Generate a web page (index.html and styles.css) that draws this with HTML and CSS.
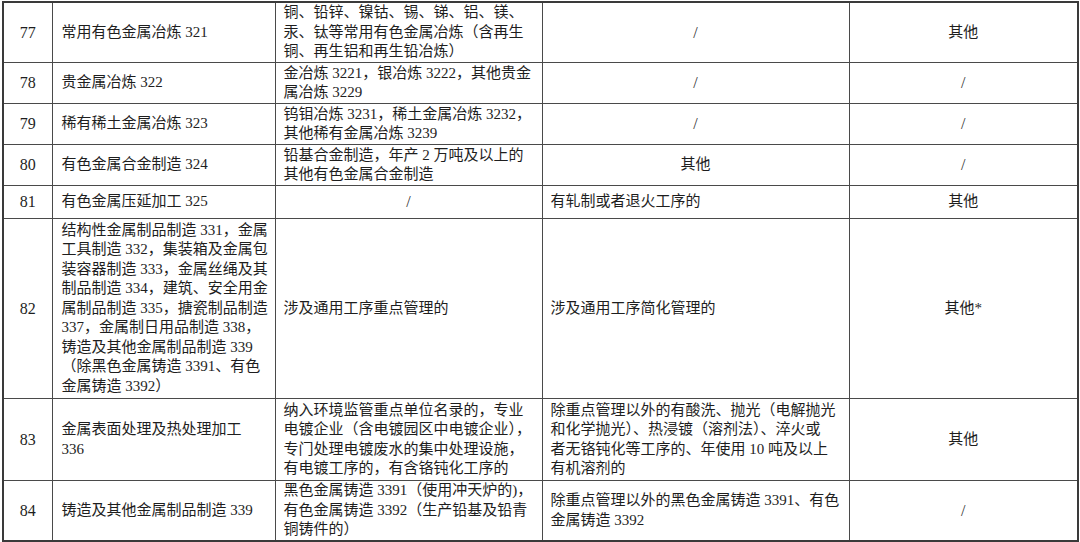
FILE: index.html
```html
<!DOCTYPE html>
<html lang="zh-CN">
<head>
<meta charset="utf-8">
<title>表</title>
<link rel="stylesheet" href="styles.css">
</head>
<body>
<table class="grid">
  <colgroup>
    <col class="c-no"><col class="c-name"><col class="c-a"><col class="c-b"><col class="c-c">
  </colgroup>
  <tbody>
    <tr class="r77">
      <td class="no">77</td>
      <td class="name">常用有色金属冶炼 321</td>
      <td class="txt">铜、铅锌、镍钴、锡、锑、铝、镁、<br>汞、钛等常用有色金属冶炼（含再生<br>铜、再生铝和再生铅冶炼）</td>
      <td class="mid slash">/</td>
      <td class="mid">其他</td>
    </tr>
    <tr class="r78">
      <td class="no">78</td>
      <td class="name">贵金属冶炼 322</td>
      <td class="txt">金冶炼 3221，银冶炼 3222，其他贵金<br>属冶炼 3229</td>
      <td class="mid slash">/</td>
      <td class="mid slash">/</td>
    </tr>
    <tr class="r79">
      <td class="no">79</td>
      <td class="name">稀有稀土金属冶炼 323</td>
      <td class="txt">钨钼冶炼 3231，稀土金属冶炼 3232，<br>其他稀有金属冶炼 3239</td>
      <td class="mid slash">/</td>
      <td class="mid slash">/</td>
    </tr>
    <tr class="r80">
      <td class="no">80</td>
      <td class="name">有色金属合金制造 324</td>
      <td class="txt">铅基合金制造，年产 2 万吨及以上的<br>其他有色金属合金制造</td>
      <td class="mid">其他</td>
      <td class="mid slash">/</td>
    </tr>
    <tr class="r81">
      <td class="no">81</td>
      <td class="name">有色金属压延加工 325</td>
      <td class="mid slash">/</td>
      <td class="txt">有轧制或者退火工序的</td>
      <td class="mid">其他</td>
    </tr>
    <tr class="r82">
      <td class="no">82</td>
      <td class="name">结构性金属制品制造 331，金属<br>工具制造 332，集装箱及金属包<br>装容器制造 333，金属丝绳及其<br>制品制造 334，建筑、安全用金<br>属制品制造 335，搪瓷制品制造<br>337，金属制日用品制造 338，<br>铸造及其他金属制品制造 339<br>（除黑色金属铸造 3391、有色<br>金属铸造 3392）</td>
      <td class="txt">涉及通用工序重点管理的</td>
      <td class="txt">涉及通用工序简化管理的</td>
      <td class="mid">其他*</td>
    </tr>
    <tr class="r83">
      <td class="no">83</td>
      <td class="name">金属表面处理及热处理加工<br>336</td>
      <td class="txt">纳入环境监管重点单位名录的，专业<br>电镀企业（含电镀园区中电镀企业），<br>专门处理电镀废水的集中处理设施，<br>有电镀工序的，有含铬钝化工序的</td>
      <td class="txt">除重点管理以外的有酸洗、抛光（电解抛光<br>和化学抛光）、热浸镀（溶剂法）、淬火或<br>者无铬钝化等工序的、年使用 10 吨及以上<br>有机溶剂的</td>
      <td class="mid">其他</td>
    </tr>
    <tr class="r84">
      <td class="no">84</td>
      <td class="name">铸造及其他金属制品制造 339</td>
      <td class="txt top">黑色金属铸造 3391（使用冲天炉的)，<br>有色金属铸造 3392（生产铅基及铅青<br>铜铸件的）</td>
      <td class="txt">除重点管理以外的黑色金属铸造 3391、有色<br>金属铸造 3392</td>
      <td class="mid slash">/</td>
    </tr>
  </tbody>
</table>
</body>
</html>
```
FILE: styles.css
```css
html, body {
  margin: 0;
  padding: 0;
  background: #ffffff;
}

body {
  padding: 1px 0 0 2px;
  font-family: "Liberation Serif", "Noto Sans CJK SC", serif;
  font-size: 15px;
  line-height: 19.5px;
  color: #1e1e1e;
}

.grid {
  border-collapse: collapse;
  table-layout: fixed;
  width: 1075px;
  border: 2px solid #3a3a3a;
}

.c-no { width: 49px; }
.c-name { width: 223px; }
.c-a { width: 267px; }
.c-b { width: 307px; }
.c-c { width: 229px; }

.grid td {
  border: 1px solid #4a4a4a;
  padding: 0 6px 0 8px;
  vertical-align: middle;
  white-space: nowrap;
  overflow: hidden;
}

.grid td.no {
  text-align: center;
  padding: 0;
  font-size: 16px;
}

.grid td.name {
  padding-left: 9px;
}

.grid td.mid {
  text-align: center;
  padding: 0;
}

.grid td.top {
  vertical-align: top;
}

.grid td.slash {
  color: #333;
  font-size: 16px;
}

.r77 td { height: 59px; }
.r78 td { height: 40px; }
.r79 td { height: 40px; }
.r80 td { height: 40px; }
.r81 td { height: 32px; }
.r82 td { height: 179px; }
.r83 td { height: 81px; }
.r84 td { height: 59px; }
```
